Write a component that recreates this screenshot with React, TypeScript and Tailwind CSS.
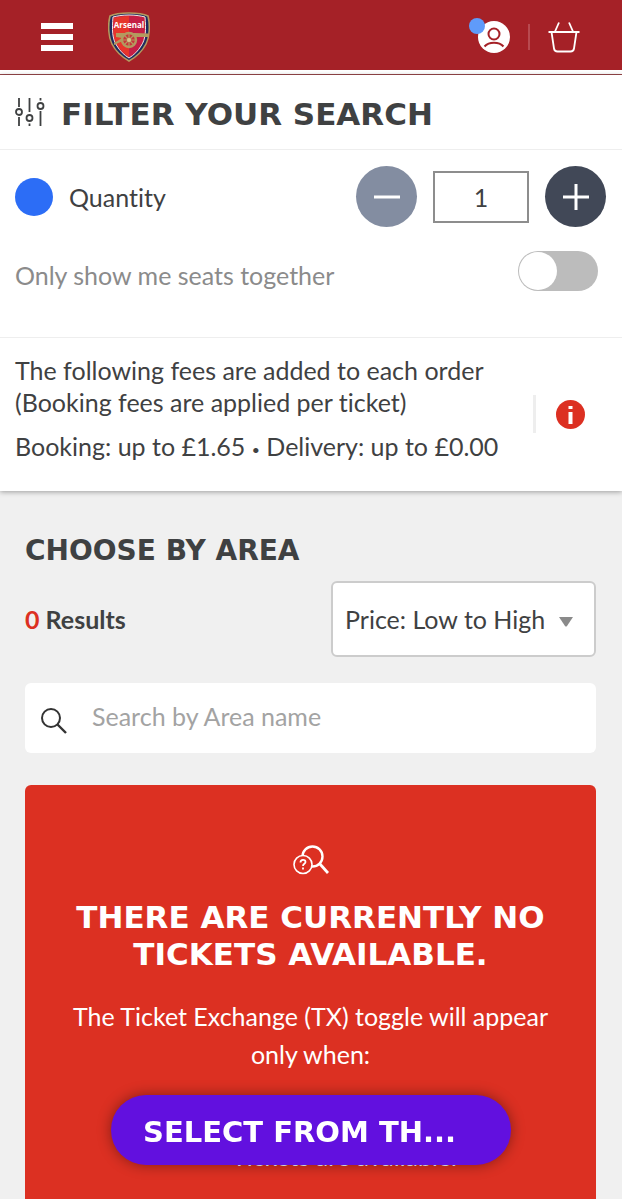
import React, { useState } from "react";

const headingFont = "font-['DejaVu_Sans',sans-serif] font-bold uppercase";

const ClubCrest = () => (
  <svg width="42" height="50" viewBox="0 0 42 50" role="img" aria-label="Arsenal">
    <path d="M21 1C13 1 6 2 2 4C0 12 0 24 4 32C8 40 14 45 21 49C28 45 34 40 38 32C42 24 42 12 40 4C36 2 29 1 21 1Z" fill="#1d2b5f" stroke="#b39a5f" strokeWidth="1.6" />
    <path d="M21 3C14 3 9 4 5 5C4 17 4 27 9 34C12 39 16 43 21 46C26 43 30 39 33 34C38 27 38 17 37 5C33 4 28 3 21 3Z" fill="#c41e45" stroke="#f3e9e4" strokeWidth="1" />
    <path d="M21 4C15 4 10 5 6 6C5 18 5 27 10 34C13 39 17 42 21 45Z" fill="#e6352b" />
    <text x="21" y="16" textAnchor="middle" fontSize="8" fontWeight="700" fill="#fff" fontFamily="'Open Sans', sans-serif">Arsenal</text>
    <path d="M8 21H27L40 21.500V25H27L17 28L6 33V31L14 26L8 25Z" fill="#b39a5f" />
    <circle cx="21" cy="28" r="7" fill="#c9343a" stroke="#b39a5f" strokeWidth="2.400" />
    <path d="M21 21V35M14 28H28M16 23L26 33M26 23L16 33" stroke="#b39a5f" strokeWidth="1.200" />
    <circle cx="21" cy="28" r="2" fill="#d9c58c" />
  </svg>
);

const AccountIcon = () => (
  <svg width="32" height="32" viewBox="0 0 32 32" fill="none" stroke="#a52127" strokeWidth="2">
    <circle cx="16" cy="16" r="16" fill="#fff" stroke="none" />
    <circle cx="16" cy="13" r="5.500" />
    <path d="M6.500 25.500C11 20.500 21 20.500 25.500 25.500" />
  </svg>
);

const BasketIcon = () => (
  <svg width="32" height="32" viewBox="0 0 32 32" fill="none" stroke="#fff" strokeWidth="1.800">
    <path d="M0.500 11H31.500M3.500 11L6 27.500Q6.500 30.500 9.500 30.500H22.500Q25.500 30.500 26 27.500L28.500 11" />
    <path d="M7 10.500L11 1.500M25 10.500L21 1.500" />
  </svg>
);

const SlidersIcon = () => (
  <svg width="30" height="30" viewBox="0 0 30 30" fill="none" stroke="#3f4142" strokeWidth="1.800">
    <path d="M4 1V10M4 20V29M14.500 1V15M14.500 26.500V29M25.500 1V3.500M25.500 14V29" />
    <circle cx="4" cy="15" r="3" />
    <circle cx="14.500" cy="21" r="3" />
    <circle cx="25.500" cy="9" r="3" />
  </svg>
);

const SearchIcon = () => (
  <svg width="26" height="26" viewBox="0 0 26 26" fill="none" stroke="#333" strokeWidth="2">
    <circle cx="10" cy="10" r="9" />
    <path d="M16.500 16.500L25 25" strokeWidth="2.400" />
  </svg>
);

const NoResultsIcon = () => (
  <svg width="36" height="30" viewBox="0 0 36 30" fill="none" stroke="#fff" strokeWidth="2.400">
    <circle cx="19.500" cy="11.500" r="10" />
    <path d="M26.500 18.500L35 28" strokeWidth="2.800" />
    <circle cx="10" cy="19.500" r="9" fill="#dc3022" strokeWidth="1.600" />
    <path d="M7.500 17.500C7.500 14 12.500 14 12.500 17C12.500 19 10 18.500 10 21M10 22.500V24.500" strokeWidth="1.800" />
  </svg>
);

export default function App() {
  const [quantity, setQuantity] = useState(1);
  const [together, setTogether] = useState(false);

  return (
    <div className="min-h-screen bg-[#f0f0f0] font-['Lato',sans-serif] text-[25px] leading-8 text-[#3f4142] [font-variant-ligatures:none]">
      <header className="border-b border-[#98484b] bg-white pb-1">
        <div className="flex h-[70px] items-center bg-[#a52127] pr-[42px] pl-[41px]">
          <button type="button" aria-label="Menu" className="mt-1 flex w-8 flex-col gap-[5px]">
            <span className="h-[6px] bg-white" />
            <span className="h-[6px] bg-white" />
            <span className="h-[6px] bg-white" />
          </button>
          <a href="#" className="mt-1 ml-[35px]">
            <ClubCrest />
          </a>
          <div className="mt-1 ml-auto flex items-center">
            <button type="button" aria-label="Account" className="relative">
              <AccountIcon />
              <span className="absolute -top-[3px] -left-[9px] size-4 rounded-full bg-[#5f9bfa]" />
            </button>
            <span className="mx-[18px] h-[26px] w-[2px] bg-[#b84a50]" />
            <button type="button" aria-label="Basket">
              <BasketIcon />
            </button>
          </div>
        </div>
      </header>

      <main>
        <div className="bg-white shadow-[0_1px_5px_rgba(0,0,0,0.35)]">
          <div className="flex h-[75px] items-center gap-4 border-b border-[#eee] px-[15px]">
            <SlidersIcon />
            <h1 className={`${headingFont} pt-1 text-[31px] whitespace-nowrap`}>Filter your search</h1>
          </div>

          <div className="h-[188px] border-b border-[#eee] pt-4 pr-4 pl-[15px]">
            <div className="flex items-center">
              <span className="mr-4 size-[38px] rounded-full bg-[#2c6df6]" />
              <label htmlFor="quantity">Quantity</label>
              <div className="ml-auto flex items-center gap-4">
                <button
                  type="button"
                  aria-label="Decrease quantity"
                  className="flex size-[61px] items-center justify-center rounded-full bg-[#838da1]"
                  onClick={() => setQuantity(Math.max(1, quantity - 1))}
                >
                  <svg width="26" height="26" viewBox="0 0 26 26" stroke="#fff" strokeWidth="3"><path d="M0 13H26" /></svg>
                </button>
                <input
                  id="quantity"
                  type="text"
                  inputMode="numeric"
                  className="h-[52px] w-24 border-2 border-[#8d8d8d] bg-white text-center"
                  value={quantity}
                  onChange={(e) => setQuantity(Number(e.target.value) || 1)}
                />
                <button
                  type="button"
                  aria-label="Increase quantity"
                  className="flex size-[61px] items-center justify-center rounded-full bg-[#414857]"
                  onClick={() => setQuantity(quantity + 1)}
                >
                  <svg width="26" height="26" viewBox="0 0 26 26" stroke="#fff" strokeWidth="3"><path d="M0 13H26M13 0V26" /></svg>
                </button>
              </div>
            </div>
            <div className="mt-6 flex items-start justify-between pr-2">
              <label htmlFor="together" className="pt-2 text-[#8b8b8b]">Only show me seats together</label>
              <input
                id="together"
                type="checkbox"
                className="h-10 w-20 appearance-none rounded-full bg-[#bcbcbc] p-px before:block before:size-[38px] before:rounded-full before:bg-white checked:bg-[#2c6df6] checked:before:ml-auto"
                checked={together}
                onChange={(e) => setTogether(e.target.checked)}
              />
            </div>
          </div>

          <div className="flex items-center pt-4 pr-[37px] pb-[29px] pl-[15px]">
            <div className="flex-1">
              <p className="max-w-[500px]">The following fees are added to each order (Booking fees are applied per ticket)</p>
              <p className="mt-3 whitespace-nowrap">
                Booking: up to £1.65 <span className="align-middle text-sm leading-none">•</span> Delivery: up to £0.00
              </p>
            </div>
            <span className="mt-3 mr-5 h-[38px] w-[3px] bg-[#eee]" />
            <button type="button" aria-label="Fee information" className="mt-3">
              <svg width="29" height="29" viewBox="0 0 29 29">
                <circle cx="14.500" cy="14.500" r="14.500" fill="#dc3022" />
                <path d="M12.500 6H16.500V9H12.500ZM12.500 12H16.500V24H12.500Z" fill="#fff" />
              </svg>
            </button>
          </div>
        </div>

        <section className="pt-11 pr-[26px] pl-[25px]">
          <h2 className={`${headingFont} text-[28px] whitespace-nowrap`}>Choose by area</h2>
          <div className="mt-[14px] flex items-center justify-between">
            <p className="font-bold">
              <span className="text-[#dc3022]">0</span> Results
            </p>
            <div className="relative w-[265px]">
              <select aria-label="Sort results" className="h-[76px] w-full appearance-none rounded-md border-2 border-[#ccc] bg-white pl-3">
                <option>Price: Low to High</option>
                <option>Price: High to Low</option>
              </select>
              <svg className="pointer-events-none absolute top-[35px] right-[23px]" width="14" height="11" viewBox="0 0 14 11">
                <path d="M0 1H14L8 10Q7 11 6 10Z" fill="#8a8a8a" />
              </svg>
            </div>
          </div>

          <div className="mt-[26px] flex h-[70px] items-center rounded-md bg-white pl-4">
            <label htmlFor="area-search" className="mt-[6px] shrink-0">
              <SearchIcon />
            </label>
            <input
              id="area-search"
              type="search"
              aria-label="Search by Area name"
              placeholder="Search by Area name"
              className="ml-[25px] h-full w-full min-w-0 bg-transparent pb-1 outline-none placeholder:text-[#a3a3a3]"
            />
          </div>

          <div className="mt-8 flex flex-col items-center rounded-t-md bg-[#dc3022] px-10 pt-[60px] pb-8 text-center text-white">
            <NoResultsIcon />
            <h2 className={`${headingFont} mt-6 text-[31px] leading-[37px]`}>
              There are currently no tickets available.
            </h2>
            <p className="mt-6 leading-[38px]">The Ticket Exchange (TX) toggle will appear only when:</p>
            <ul className="mt-16 pl-[68px] leading-[38px]">
              <li>Tickets are available.</li>
            </ul>
          </div>
        </section>
      </main>

      {/* stays above the page while it scrolls */}
      <button
        type="button"
        className={`${headingFont} fixed inset-x-0 bottom-[34px] mx-auto h-[70px] w-[400px] rounded-full bg-[#6210df] px-8 pt-1 text-left text-[29px] whitespace-nowrap text-white shadow-[0_0_14px_rgba(0,0,0,0.4)]`}
      >
        Select from th...
      </button>
    </div>
  );
}
